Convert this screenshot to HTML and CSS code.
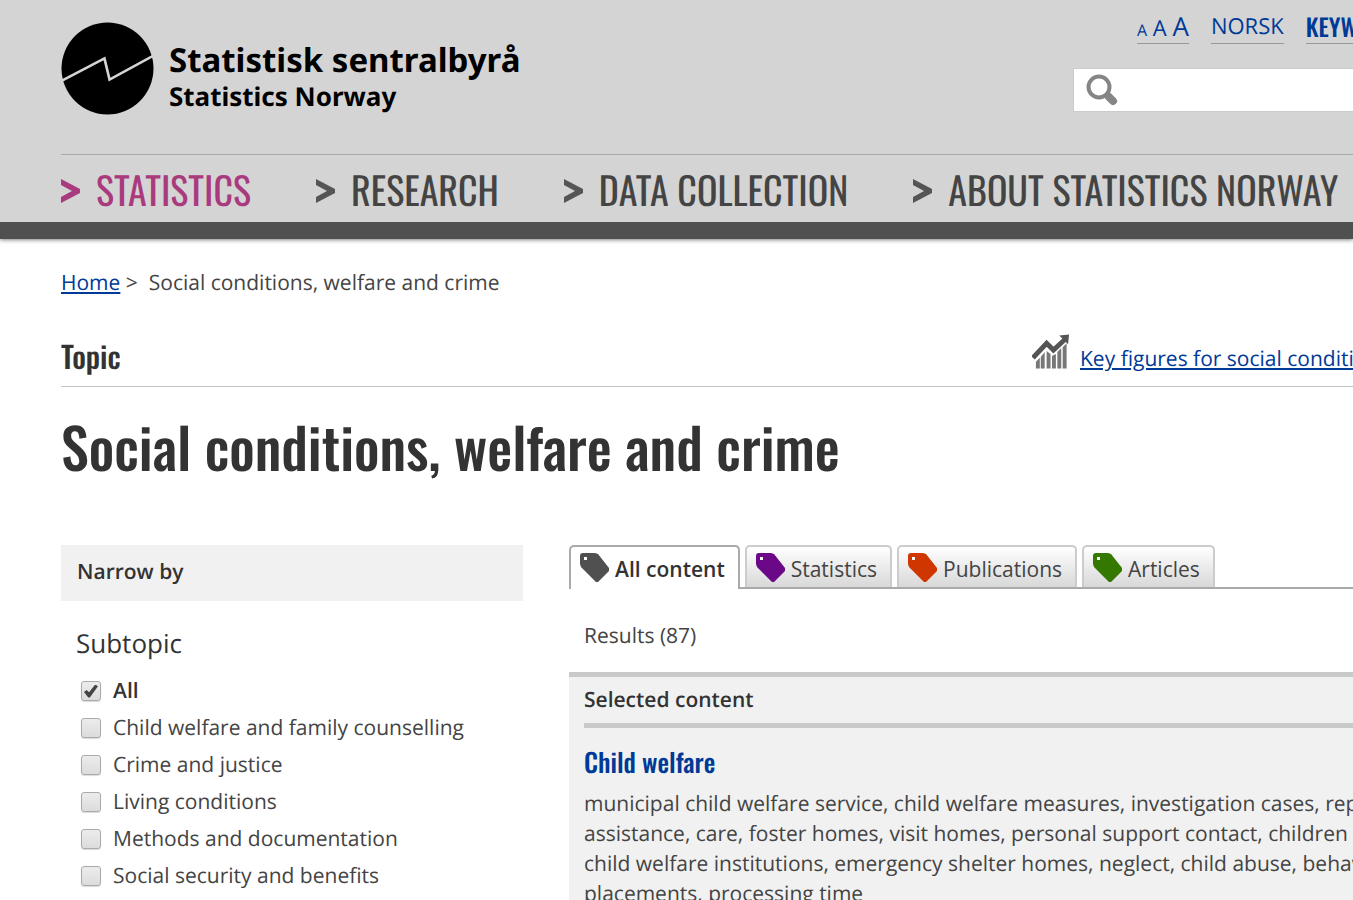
FILE: index.html
```html
<!DOCTYPE html>
<html lang="en">
<head>
  <meta charset="UTF-8" />
  <meta name="viewport" content="width=device-width, initial-scale=1.0" />
  <title>Social conditions, welfare and crime - Statistics Norway</title>
  <link rel="stylesheet" href="styles.css">
</head>
<body>
  <header class="site-header">
    <div class="header-top">
      <a href="#" class="logo">
        <svg class="logo-mark" viewBox="0 0 92 92" aria-hidden="true">
          <circle cx="46" cy="46" r="45.5" />
          <path d="M1 58 L43 36 L48 57 L92 33" fill="none" stroke="#d4d4d4" stroke-width="2.6" />
        </svg>
        <span class="logo-text">
          <span class="logo-name">Statistisk sentralbyrå</span>
          <span class="logo-sub">Statistics Norway</span>
        </span>
      </a>
      <div class="tools">
        <div class="tool-links">
          <a href="#" class="text-size"><span class="small">A</span> <span>A</span> <span class="large">A</span></a>
          <a href="#">NORSK</a>
          <a href="#" class="keywords">KEYWORDS</a>
        </div>
        <form class="search">
          <svg class="search-icon" viewBox="0 0 32 32" aria-hidden="true">
            <circle cx="13" cy="13" r="10.5" fill="none" stroke="#858585" stroke-width="4" />
            <path d="M20 20 L27 27" stroke="#858585" stroke-width="5" />
            <path d="M23 23 L27 27" stroke="#858585" stroke-width="8" stroke-linecap="round" />
          </svg>
          <input type="text" class="search-input" aria-label="Search">
        </form>
      </div>
    </div>
    <nav class="main-nav">
      <a href="#" class="active"><svg viewBox="0 0 20 26"><path d="M0 1 L19 11 V15 L0 25 V19 L11 13 L0 7 Z" /></svg>STATISTICS</a>
      <a href="#"><svg viewBox="0 0 20 26"><path d="M0 1 L19 11 V15 L0 25 V19 L11 13 L0 7 Z" /></svg>RESEARCH</a>
      <a href="#"><svg viewBox="0 0 20 26"><path d="M0 1 L19 11 V15 L0 25 V19 L11 13 L0 7 Z" /></svg>DATA COLLECTION</a>
      <a href="#"><svg viewBox="0 0 20 26"><path d="M0 1 L19 11 V15 L0 25 V19 L11 13 L0 7 Z" /></svg>ABOUT STATISTICS NORWAY</a>
    </nav>
  </header>

  <main class="page">
    <div class="breadcrumb"><a href="#">Home</a> &gt;&nbsp; Social conditions, welfare and crime</div>
    <div class="topic-row">
      <span class="topic">Topic</span>
      <a href="#" class="key-figures">
        <svg viewBox="0 0 40 36" aria-hidden="true">
          <path d="M4 35 V28 L8 24 V35 Z M9 35 V23 L13 18 V35 Z M15 35 V17 L19 20 V35 Z M20.500 35 V22 L24.500 20 V35 Z M26 35 V18 L30 14 V35 Z M31.500 35 V13 L35.500 9 V35 Z" fill="#777" />
          <path d="M1 24 L15 9 L22 16 L34 5" fill="none" stroke="#555" stroke-width="5" />
          <path d="M28 1 L38 0 L37 10 Z" />
        </svg>
        <span>Key figures for social conditions, welfare and crime</span>
      </a>
    </div>
    <h1>Social conditions, welfare and crime</h1>

    <div class="columns">
      <aside class="sidebar">
        <h2 class="narrow">Narrow by</h2>
        <fieldset class="filters">
          <legend>Subtopic</legend>
          <label class="all"><input type="checkbox" checked>All</label>
          <label><input type="checkbox">Child welfare and family counselling</label>
          <label><input type="checkbox">Crime and justice</label>
          <label><input type="checkbox">Living conditions</label>
          <label><input type="checkbox">Methods and documentation</label>
          <label><input type="checkbox">Social security and benefits</label>
        </fieldset>
      </aside>

      <section class="content">
        <div class="tabs">
          <button type="button" class="tab selected"><svg class="tag" viewBox="0 0 30 29"><path fill-rule="evenodd" d="M3 0 H15 L18 1 L29 15 V18 L18 29 H16 L1 14 L0 11 V3 Q0 0 3 0 Z M4 4 V7 H7 V4 Z" /></svg>All content</button>
          <button type="button" class="tab"><svg class="tag purple" viewBox="0 0 30 29"><path fill-rule="evenodd" d="M3 0 H15 L18 1 L29 15 V18 L18 29 H16 L1 14 L0 11 V3 Q0 0 3 0 Z M4 4 V7 H7 V4 Z" /></svg>Statistics</button>
          <button type="button" class="tab"><svg class="tag orange" viewBox="0 0 30 29"><path fill-rule="evenodd" d="M3 0 H15 L18 1 L29 15 V18 L18 29 H16 L1 14 L0 11 V3 Q0 0 3 0 Z M4 4 V7 H7 V4 Z" /></svg>Publications</button>
          <button type="button" class="tab"><svg class="tag green" viewBox="0 0 30 29"><path fill-rule="evenodd" d="M3 0 H15 L18 1 L29 15 V18 L18 29 H16 L1 14 L0 11 V3 Q0 0 3 0 Z M4 4 V7 H7 V4 Z" /></svg>Articles</button>
        </div>
        <p class="results">Results (87)</p>
        <div class="selected-content">
          <h2>Selected content</h2>
          <h3><a href="#">Child welfare</a></h3>
          <p>municipal child welfare service, child welfare measures, investigation cases, reports,<br>
            assistance, care, foster homes, visit homes, personal support contact, children under care,<br>
            child welfare institutions, emergency shelter homes, neglect, child abuse, behaviour,<br>
            placements, processing time</p>
        </div>
      </section>
    </div>
  </main>
</body>
</html>
```

FILE: styles.css
```css
* {
  box-sizing: border-box;
}
body {
  margin: 0;
  font-family: "Open Sans", sans-serif;
  font-size: 21px;
  line-height: 30px;
  text-rendering: geometricPrecision;
  color: #444;
  background-color: #fff;
  overflow-x: hidden;
}
a {
  color: #003a97;
}
h1, h2, h3, p {
  margin: 0;
}

/* header */
.site-header {
  padding-left: 61px;
  background-color: #d4d4d4;
  border-bottom: 17px solid #505050;
  box-shadow: 0 1px 4px rgba(0, 0, 0, 0.5);
  overflow: hidden;
}
.header-top {
  display: flex;
  justify-content: space-between;
  height: 154px;
}
.logo {
  display: flex;
  gap: 15px;
  padding-top: 22px;
  color: #000;
  text-decoration: none;
}
.logo-mark {
  width: 93px;
  height: 93px;
}
.logo-text {
  display: flex;
  flex-direction: column;
  padding-top: 17px;
  font-family: "Noto Sans", sans-serif;
  font-weight: 700;
}
.logo-name {
  font-size: 33px;
  line-height: 41px;
}
.logo-sub {
  font-size: 26px;
  line-height: 32px;
}
.tools {
  width: 280px;
  padding-top: 11px;
}
.tool-links {
  display: flex;
  gap: 22px;
  padding-left: 64px;
  margin-bottom: 24px;
  white-space: nowrap;
}
.tool-links a {
  height: 33px;
  font-size: 22px;
  text-decoration: none;
  border-bottom: 1px solid #999;
}
.tool-links .small {
  font-size: 16px;
}
.tool-links .large {
  font-size: 26px;
}
.tool-links .keywords {
  font-family: Oswald, sans-serif;
  font-size: 24px;
  font-weight: 500;
}
.search {
  display: flex;
  align-items: center;
  height: 44px;
  padding-left: 12px;
  background-color: #fff;
  border: 1px solid #ccc;
  border-right: none;
}
.search-icon {
  width: 32px;
  height: 32px;
}
.search-input {
  flex: 1;
  min-width: 0;
  border: none;
  outline: none;
  font-size: 21px;
}
.main-nav {
  display: flex;
  gap: 65px;
  height: 68px;
  align-items: center;
  border-top: 1px solid #a8a8a8;
  white-space: nowrap;
}
.main-nav a {
  display: flex;
  align-items: center;
  gap: 15px;
  color: #444;
  fill: #555;
  font-family: Oswald, sans-serif;
  font-size: 38px;
  text-decoration: none;
}
.main-nav .active {
  color: #a93a7e;
  fill: #a93a7e;
}
.main-nav svg {
  width: 20px;
  height: 26px;
  margin-top: 4px;
}

/* page heading */
.page {
  padding: 29px 0 0 61px;
}
.topic-row {
  display: flex;
  justify-content: space-between;
  height: 89px;
  padding-top: 36px;
  border-bottom: 1px solid #c4c4c4;
}
.topic {
  padding-top: 7px;
  color: #333;
  font-family: Oswald, sans-serif;
  font-size: 30px;
  font-weight: 500;
}
.key-figures {
  display: flex;
  gap: 9px;
  width: 321px;
  white-space: nowrap;
  overflow: hidden;
}
.key-figures svg {
  flex: none;
  width: 39px;
  height: 36px;
  fill: #555;
}
.key-figures span {
  padding-top: 10px;
}
h1 {
  padding: 20px 0 58px;
  color: #333;
  font-family: Oswald, sans-serif;
  font-size: 56px;
  font-weight: 500;
  line-height: 80px;
}

/* filters */
.columns {
  display: grid;
  grid-template-columns: 462px minmax(0, 1fr);
  gap: 46px;
}
.narrow {
  padding: 12px 16px 14px;
  background-color: #f1f1f1;
  color: #333;
  font-size: 21px;
  font-weight: 600;
}
.filters {
  display: flex;
  flex-direction: column;
  gap: 7px;
  margin: 0;
  padding: 18px 20px;
  border: none;
}
.filters legend {
  padding: 27px 0 0;
  margin-left: -5px;
  font-size: 26px;
  color: #333;
}
.filters label {
  display: flex;
  align-items: center;
  gap: 12px;
}
.filters .all {
  font-weight: 600;
  color: #333;
}
.filters input {
  appearance: none;
  display: grid;
  place-items: center;
  width: 20px;
  height: 20px;
  margin: 0;
  border: 1px solid #aaa;
  border-radius: 3px;
  background: linear-gradient(#ececec, #dcdcdc);
  box-shadow: 0 1px 1px rgba(0, 0, 0, 0.15);
}
.filters input:checked::before {
  content: "";
  width: 14px;
  height: 13px;
  background-color: #444;
  clip-path: polygon(0 57%, 18% 42%, 36% 60%, 80% 0, 100% 14%, 42% 100%, 30% 100%);
}

/* tabs */
.tabs {
  display: flex;
  gap: 5px;
  height: 44px;
  border-bottom: 2px solid #aaa;
}
.tab {
  display: flex;
  gap: 5px;
  height: 42px;
  padding: 6px 13px 0 9px;
  border: 2px solid #ccc;
  border-bottom: none;
  border-radius: 5px 5px 0 0;
  background: linear-gradient(#fff, #d8d8d8);
  color: #444;
  font-family: inherit;
  font-size: 21px;
  line-height: 32px;
}
.tab.selected {
  height: 44px;
  border-color: #aaa;
  background: #fff;
  color: #333;
  font-weight: 600;
}
.tag {
  width: 30px;
  height: 29px;
  fill: #505050;
}
.purple {
  fill: #6a0888;
}
.orange {
  fill: #cf3600;
}
.green {
  fill: #347800;
}
.results {
  padding: 32px 15px 21px;
}
.selected-content {
  padding: 8px 0 30px 15px;
  border-top: 5px solid #c9c9c9;
  background-color: #f1f1f1;
  white-space: nowrap;
  overflow: hidden;
}
.selected-content h2 {
  padding-bottom: 8px;
  border-bottom: 5px solid #c9c9c9;
  color: #333;
  font-size: 21px;
  font-weight: 600;
}
.selected-content h3 {
  padding: 19px 0 12px;
  font-family: Oswald, sans-serif;
  font-size: 26px;
  font-weight: 500;
}
.selected-content h3 a {
  text-decoration: none;
}
```
